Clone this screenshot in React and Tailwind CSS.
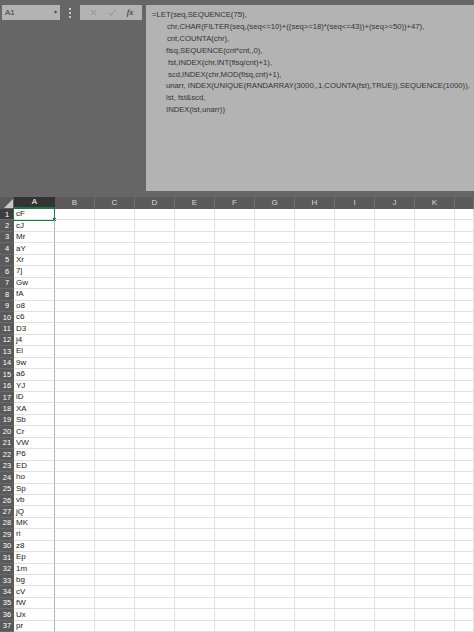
import React from "react";

const COLS = ["A", "B", "C", "D", "E", "F", "G", "H", "I", "J", "K", ""];
const VALUES = [
  "cF", "cJ", "Mr", "aY", "Xr", "7j", "Gw", "fA", "o8", "c6", "D3", "j4", "El",
  "9w", "a6", "YJ", "iD", "XA", "Sb", "Cr", "VW", "P6", "ED", "ho", "Sp", "vb",
  "jQ", "MK", "ri", "z8", "Ep", "1m", "bg", "cV", "fW", "Ux", "pr",
];

const FORMULA = [
  { pad: "pl-0", text: "=LET(seq,SEQUENCE(75)," },
  { pad: "pl-[15px]", text: "chr,CHAR(FILTER(seq,(seq<=10)+((seq>=18)*(seq<=43))+(seq>=50))+47)," },
  { pad: "pl-[15px]", text: "cnt,COUNTA(chr)," },
  { pad: "pl-[14px]", text: "flsq,SEQUENCE(cnt*cnt,,0)," },
  { pad: "pl-[16px]", text: "fst,INDEX(chr,INT(flsq/cnt)+1)," },
  { pad: "pl-[16px]", text: "scd,INDEX(chr,MOD(flsq,cnt)+1)," },
  { pad: "pl-[14px]", text: "unarr, INDEX(UNIQUE(RANDARRAY(3000,,1,COUNTA(fst),TRUE)),SEQUENCE(1000))," },
  { pad: "pl-[14px]", text: "lst, fst&scd," },
  { pad: "pl-[14px]", text: "INDEX(lst,unarr))" },
];

function colWidth(i) {
  if (i === 0) return "w-[41px]";
  if (i === 11) return "w-[19px]";
  return "w-[40px]";
}

export default function App() {
  return (
    <div className="w-[474px] h-[632px] overflow-hidden bg-white font-['Liberation_Sans',Arial,sans-serif]">
      {/* formula bar area */}
      <div className="h-[197px] bg-[#666666] flex items-start pt-[5px] pl-[2px]">
        <div className="w-[58px] h-[15px] bg-[#b3b3b3] flex items-center justify-between px-[3px] text-[8px] text-[#3a3a3a]">
          <span>A1</span>
          <span className="text-[6px] text-[#4a4a4a]">▾</span>
        </div>
        <div className="w-[20px] h-[15px] flex flex-col items-center justify-center gap-[2px]">
          <div className="w-[2px] h-[2px] bg-[#c8c8c8]" />
          <div className="w-[2px] h-[2px] bg-[#c8c8c8]" />
          <div className="w-[2px] h-[2px] bg-[#c8c8c8]" />
        </div>
        <div className="w-[62px] h-[15px] bg-[#b3b3b3] flex items-center justify-around px-[4px]">
          <svg width="9" height="9" viewBox="0 0 10 10">
            <path d="M2 2 L8 8 M8 2 L2 8" stroke="#9a9a9a" strokeWidth="1.2" />
          </svg>
          <svg width="10" height="9" viewBox="0 0 10 10">
            <path d="M1.5 5.5 L4 8 L9 2" stroke="#9a9a9a" strokeWidth="1.3" fill="none" />
          </svg>
          <span className="text-[9px] italic text-[#222] font-['Liberation_Serif',serif]">fx</span>
        </div>
        <div className="ml-[4px] w-[328px] h-[186px] bg-[#b3b3b3] pl-[6px] pt-[4px] text-[7.7px] leading-[11.9px] text-[#333333] whitespace-nowrap">
          {FORMULA.map((l, i) => (
            <div key={i} className={l.pad}>{l.text}</div>
          ))}
        </div>
      </div>

      {/* column header */}
      <div className="flex h-[12px] bg-[#5a5a5a] text-[8px] text-[#d8d8d8]">
        <div className="w-[14px] h-full relative">
          <svg className="absolute right-[1px] bottom-[1px]" width="9" height="9" viewBox="0 0 9 9">
            <path d="M9 0 L9 9 L0 9 Z" fill="#c8c8c8" />
          </svg>
        </div>
        {COLS.map((c, i) => (
          <div
            key={i}
            className={`${colWidth(i)} h-full flex items-center justify-center ${
              i === 0 ? "bg-[#333333] text-white border-b-2 border-[#217346]" : "border-r border-[#707070]"
            }`}
          >
            {c}
          </div>
        ))}
      </div>

      {/* rows */}
      {VALUES.map((v, r) => (
        <div key={r} className="flex h-[11.45px]">
          <div
            className={`w-[14px] h-full flex items-center justify-center text-[7.5px] text-white border-b border-[#6a6a6a] ${
              r === 0 ? "bg-[#3d3d3d]" : "bg-[#5a5a5a]"
            }`}
          >
            {r + 1}
          </div>
          {COLS.map((c, i) => (
            <div
              key={i}
              className={`${colWidth(i)} h-full border-b border-[#e1e1e1] ${
                i === 0 ? "border-r border-r-[#aab6c8]" : "border-r border-r-[#e1e1e1]"
              } relative flex items-center text-[8px] text-[#1a1a1a] pl-[2px]`}
            >
              {i === 0 ? v : null}
              {i === 0 && r === 0 && (
                <>
                  <div className="absolute -left-px -top-px w-[42px] h-[12.5px] border-[1.5px] border-[#217346]" />
                  <div className="absolute -right-[2px] -bottom-[2px] w-[3px] h-[3px] bg-[#217346]" />
                </>
              )}
            </div>
          ))}
        </div>
      ))}
    </div>
  );
}
